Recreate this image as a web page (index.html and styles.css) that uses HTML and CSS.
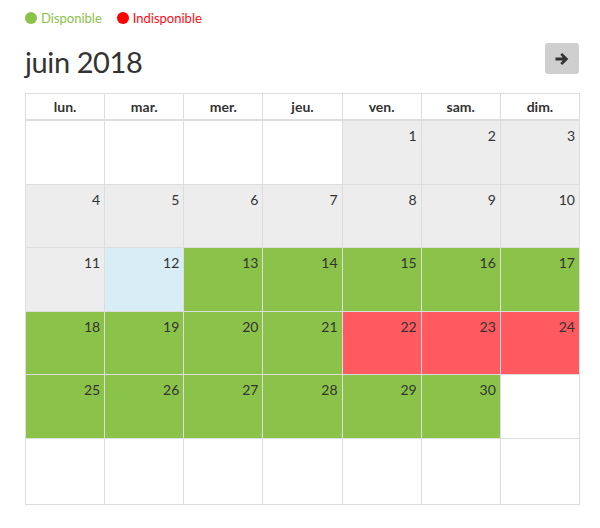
FILE: index.html
```html
<!DOCTYPE html>
<html lang="fr">
<head>
<meta charset="utf-8">
<title>Calendrier</title>
<link rel="stylesheet" href="styles.css">
</head>
<body>
<div class="page">
  <div class="legend">
    <span class="legend-item available"><span class="dot"></span>Disponible</span>
    <span class="legend-item unavailable"><span class="dot"></span>Indisponible</span>
  </div>
  <div class="toolbar">
    <h2 class="title">juin 2018</h2>
    <button class="next" type="button" aria-label="Mois suivant">
      <svg width="16" height="16" viewBox="0 0 16 16"><path d="M1.5 6.4h7.4L6.3 3.8l1.9-1.9L14.3 8l-6.1 6.1-1.9-1.9 2.6-2.6H1.5z" fill="#333"/></svg>
    </button>
  </div>
  <table class="cal">
    <thead>
      <tr><th>lun.</th><th>mar.</th><th>mer.</th><th>jeu.</th><th>ven.</th><th>sam.</th><th>dim.</th></tr>
    </thead>
    <tbody>
      <tr class="r1">
        <td></td><td></td><td></td><td></td>
        <td class="past">1</td><td class="past">2</td><td class="past">3</td>
      </tr>
      <tr>
        <td class="past">4</td><td class="past">5</td><td class="past">6</td><td class="past">7</td><td class="past">8</td><td class="past">9</td><td class="past">10</td>
      </tr>
      <tr>
        <td class="past">11</td><td class="today">12</td><td class="free">13</td><td class="free">14</td><td class="free">15</td><td class="free">16</td><td class="free">17</td>
      </tr>
      <tr>
        <td class="free">18</td><td class="free">19</td><td class="free">20</td><td class="free">21</td><td class="busy">22</td><td class="busy">23</td><td class="busy">24</td>
      </tr>
      <tr>
        <td class="free">25</td><td class="free">26</td><td class="free">27</td><td class="free">28</td><td class="free">29</td><td class="free">30</td><td></td>
      </tr>
      <tr class="last">
        <td></td><td></td><td></td><td></td><td></td><td></td><td></td>
      </tr>
    </tbody>
  </table>
</div>
</body>
</html>
```
FILE: styles.css
```css
html, body {
  margin: 0;
  padding: 0;
  background: #fff;
}
body {
  font-family: Lato, "Open Sans", sans-serif;
  color: #333;
}
.page {
  padding: 10px 21px 0 25px;
}
.legend {
  display: flex;
  gap: 15px;
  font-size: 13px;
  line-height: 16px;
}
.legend-item {
  display: flex;
  align-items: center;
  gap: 4px;
}
.legend-item .dot {
  width: 12px;
  height: 12px;
  border-radius: 50%;
  display: inline-block;
}
.available { color: #8bc34a; }
.available .dot { background: #8bc34a; }
.unavailable { color: #ff0a14; }
.unavailable .dot { background: #ff0000; }
.toolbar {
  display: flex;
  justify-content: space-between;
  align-items: flex-start;
  margin-top: 17px;
  height: 50px;
}
.title {
  margin: 0;
  font-size: 29px;
  font-weight: 400;
  line-height: 36px;
  margin-top: 1px;
  letter-spacing: -0.4px;
}
.next {
  width: 34px;
  height: 31px;
  border: none;
  border-radius: 3px;
  background: #cfcfcf;
  display: flex;
  align-items: center;
  justify-content: center;
  padding: 0;
  margin-top: 0;
}
.cal {
  width: 555px;
  border-collapse: collapse;
  table-layout: fixed;
}
.cal th, .cal td {
  border: 1px solid #ddd;
}
.cal th {
  height: 25px;
  font-size: 14px;
  font-weight: 700;
  text-align: center;
  padding: 0;
  border-bottom-width: 2px;
}
.cal td {
  vertical-align: top;
  text-align: right;
  padding: 7px 4px 0 0;
  font-size: 14px;
  line-height: 16px;
}
.cal tbody tr { height: 63.5px; }
.cal tbody tr.r1 { height: 64px; }
.cal tbody tr.last { height: 66px; }
.past { background: #ededed; }
.today { background: #d9edf7; }
.free { background: #8bc34a; }
.busy { background: #ff5a5f; }
```
